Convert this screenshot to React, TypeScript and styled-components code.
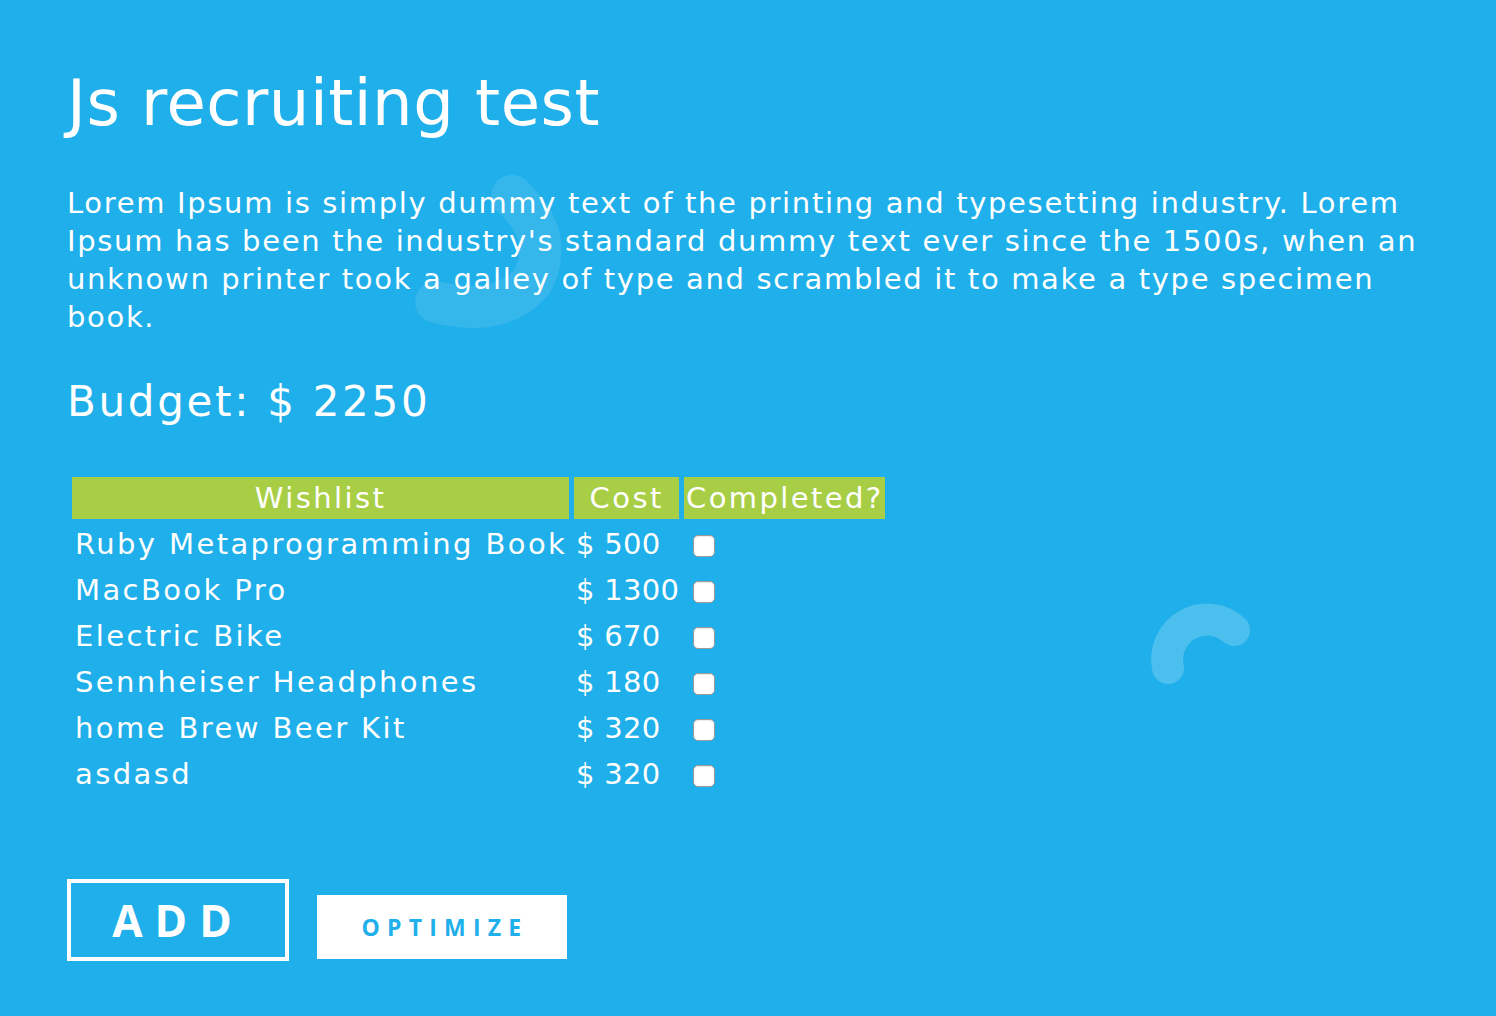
import React from "react";
import styled, { createGlobalStyle } from "styled-components";

const Global = createGlobalStyle`
  html, body { margin: 0; padding: 0; background: #1fafea; }
  body { font-family: "DejaVu Sans", "Liberation Sans", sans-serif; color: #fff; }
  * { box-sizing: border-box; }
`;

const Page = styled.main`
  position: relative;
  min-height: 1016px;
  padding: 63px 56px 40px 67px;
  overflow: hidden;
`;

const Decor = styled.svg`
  position: absolute;
  left: 0;
  top: 0;
  width: 1496px;
  height: 1016px;
  pointer-events: none;
  z-index: 0;
`;

const Content = styled.div`
  position: relative;
  z-index: 1;
`;

const Title = styled.h1`
  margin: 0;
  font-size: 64px;
  line-height: 80px;
  font-weight: 400;
  letter-spacing: 0.5px;
`;

const Intro = styled.p`
  margin: 41px 0 0;
  font-size: 29px;
  line-height: 38px;
  letter-spacing: 1.67px;
  max-width: 1370px;
`;

const Budget = styled.h2`
  margin: 41px 0 0;
  font-size: 42px;
  line-height: 50px;
  font-weight: 400;
  letter-spacing: 2.7px;
`;

const Table = styled.table`
  margin: 46px 0 0;
  border-collapse: separate;
  border-spacing: 5px 4px;
  font-size: 29px;
  letter-spacing: 2.4px;
`;

const HeadCell = styled.th<{ $w: number }>`
  width: ${(p) => p.$w}px;
  height: 42px;
  padding: 0;
  background: #a8ce46;
  font-weight: 400;
  text-align: center;
  white-space: nowrap;
`;

const Cell = styled.td<{ $tight?: boolean }>`
  height: 42px;
  padding: 0 0 0 ${(p) => (p.$tight ? 2 : 3)}px;
  white-space: nowrap;
  vertical-align: middle;
  letter-spacing: ${(p) => (p.$tight ? "0.3px" : "inherit")};
`;

const CheckCell = styled.td`
  height: 42px;
  padding: 0 0 0 9px;
  vertical-align: middle;
`;

const Check = styled.input`
  appearance: none;
  display: block;
  margin: 4px 0 0;
  width: 22px;
  height: 22px;
  border: 1px solid #9a9a9a;
  border-radius: 5px;
  background: #fff;
  box-shadow: inset 0 1px 1px rgba(0, 0, 0, 0.08);
`;

const Actions = styled.div`
  margin-top: 80px;
  display: flex;
  align-items: flex-end;
  gap: 28px;
`;

const AddButton = styled.button`
  width: 222px;
  height: 82px;
  padding: 0;
  border: 4px solid #fff;
  background: transparent;
  color: #fff;
  font-family: "Open Sans", "DejaVu Sans", sans-serif;
  font-weight: 700;
  font-size: 44px;
  letter-spacing: 12px;
  line-height: 1;
`;

const OptimizeButton = styled.button`
  width: 250px;
  height: 64px;
  margin-bottom: 2px;
  padding: 0 0 0 6px;
  border: none;
  background: #fff;
  color: #1fafea;
  font-family: "Open Sans", "DejaVu Sans", sans-serif;
  font-weight: 700;
  font-size: 23px;
  letter-spacing: 7.2px;
  line-height: 1;
`;

const items = [
  { name: "Ruby Metaprogramming Book", cost: 500 },
  { name: "MacBook Pro", cost: 1300 },
  { name: "Electric Bike", cost: 670 },
  { name: "Sennheiser Headphones", cost: 180 },
  { name: "home Brew Beer Kit", cost: 320 },
  { name: "asdasd", cost: 320 },
];

export default function App() {
  return (
    <>
      <Global />
      <Page>
        <Decor viewBox="0 0 1496 1016">
          <path
            d="M512 196 Q556 236 532 282 Q500 318 436 302"
            fill="none"
            stroke="rgba(255,255,255,0.1)"
            strokeWidth={42}
            strokeLinecap="round"
          />
          <path
            d="M1168 668 A40 40 0 0 1 1234 630"
            fill="none"
            stroke="rgba(255,255,255,0.2)"
            strokeWidth={32}
            strokeLinecap="round"
          />
        </Decor>
        <Content>
          <Title>Js recruiting test</Title>
          <Intro>
            Lorem Ipsum is simply dummy text of the printing and typesetting
            industry. Lorem Ipsum has been the industry's standard dummy text
            ever since the 1500s, when an unknown printer took a galley of type
            and scrambled it to make a type specimen book.
          </Intro>
          <Budget>Budget: $ 2250</Budget>
          <Table>
            <thead>
              <tr>
                <HeadCell $w={497}>Wishlist</HeadCell>
                <HeadCell $w={105}>Cost</HeadCell>
                <HeadCell $w={201}>Completed?</HeadCell>
              </tr>
            </thead>
            <tbody>
              {items.map((it, i) => (
                <tr key={i}>
                  <Cell>{it.name}</Cell>
                  <Cell $tight>$ {it.cost}</Cell>
                  <CheckCell>
                    <Check type="checkbox" />
                  </CheckCell>
                </tr>
              ))}
            </tbody>
          </Table>
          <Actions>
            <AddButton>ADD</AddButton>
            <OptimizeButton>OPTIMIZE</OptimizeButton>
          </Actions>
        </Content>
      </Page>
    </>
  );
}
